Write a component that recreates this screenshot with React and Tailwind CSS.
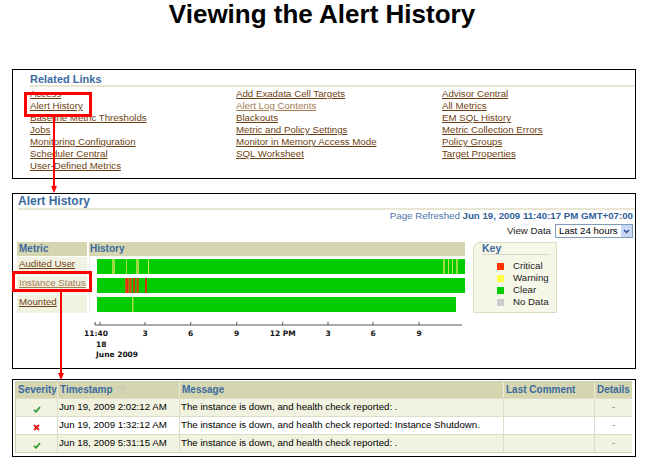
import React from 'react'

const col1 = ['Access', 'Alert History', 'Baseline Metric Thresholds', 'Jobs', 'Monitoring Configuration', 'Scheduler Central', 'User-Defined Metrics']
const col2 = ['Add Exadata Cell Targets', 'Alert Log Contents', 'Blackouts', 'Metric and Policy Settings', 'Monitor in Memory Access Mode', 'SQL Worksheet']
const col3 = ['Advisor Central', 'All Metrics', 'EM SQL History', 'Metric Collection Errors', 'Policy Groups', 'Target Properties']

const visited = ['Alert Log Contents']

function LinkCol({ items }) {
  return (
    <div className="flex flex-col w-[206px] shrink-0">
      {items.map(t => (
        <a
          key={t}
          className={
            'h-[12px] leading-[12px] underline underline-offset-[1px] whitespace-nowrap ' +
            (visited.includes(t) ? 'text-[#a57c52]' : 'text-[#6e3f12]')
          }
        >
          {t}
        </a>
      ))}
    </div>
  )
}

function Bar({ end = 368, stripes }) {
  return (
    <svg width="368" height="15" className="block">
      <rect x="0" y="0" width={end} height="15" fill="#00cc00" />
      {stripes.map(([x, w, c], i) => (
        <rect key={i} x={x} y="0" width={w} height="15" fill={c} />
      ))}
    </svg>
  )
}

const rows = [
  {
    name: 'Audited User',
    light: false,
    end: 368,
    stripes: [
      [15, 3, '#99dd44'], [29, 1, '#aadd44'], [39, 3, '#99dd44'], [51, 1, '#ccee55'],
      [346, 2, '#99dd44'], [351, 1, '#bbe655'], [355, 1, '#bbe655'], [359, 2, '#99dd44'],
    ],
  },
  {
    name: 'Instance Status',
    light: true,
    end: 368,
    stripes: [
      [28, 4, '#cc6611'], [29, 2, '#dd3311'], [32.5, 2, '#dd4411'], [36, 2, '#cc3311'],
      [39.5, 2, '#cc6611'], [40, 1.5, '#dd3311'], [48, 2, '#cc3311'],
    ],
  },
  { name: 'Mounted', light: false, end: 359, stripes: [[35, 1.5, '#aadd44']] },
]

const keyItems = [
  ['Critical', 'bg-[#ff3300]'],
  ['Warning', 'bg-[#ffff44]'],
  ['Clear', 'bg-[#00cc00]'],
  ['No Data', 'bg-[#cccccc]'],
]

const ticks = [15, 20, 65, 110.7, 156.7, 202.7, 248, 293, 339]
const tickLabels = [
  [65, '3'], [110.7, '6'], [156.7, '9'], [202.7, '12 PM'], [248, '3'], [293, '6'], [339, '9'],
]

const alerts = [
  { ok: true, ts: 'Jun 19, 2009 2:02:12 AM', msg: 'The instance is down, and health check reported: .', bg: 'bg-[#f2f2e1]' },
  { ok: false, ts: 'Jun 19, 2009 1:32:12 AM', msg: 'The instance is down, and health check reported: Instance Shutdown.', bg: 'bg-white' },
  { ok: true, ts: 'Jun 18, 2009 5:31:15 AM', msg: 'The instance is down, and health check reported: .', bg: 'bg-[#f2f2e1]' },
]

function Check() {
  return (
    <svg width="8" height="7" viewBox="0 0 8 7">
      <path d="M1 3.8 L3 5.8 L7 1" fill="none" stroke="#2f9a2f" strokeWidth="1.7" />
    </svg>
  )
}

function Cross() {
  return (
    <svg width="7" height="7" viewBox="0 0 7 7">
      <path d="M1 1 L6 6 M6 1 L1 6" fill="none" stroke="#e01818" strokeWidth="1.8" />
    </svg>
  )
}

export default function App() {
  return (
    <div className="relative w-[646px] h-[465px] bg-white overflow-hidden font-['Liberation_Sans',Arial,sans-serif] text-black text-[9.7px]">
      <h1 className="pt-[1px] h-[69px] text-center text-[26px] leading-[26px] font-bold pr-[2px]">
        Viewing the Alert History
      </h1>

      {/* related links */}
      <div className="ml-[12px] w-[624px] h-[110px] border border-black pt-[3px] pl-[17px]">
        <div className="h-[14px] leading-[12px] text-[11px] font-bold text-[#3a6aa0] border-b-2 border-[#e6e6d3]">
          Related Links
        </div>
        <div className="mt-[1px] flex">
          <LinkCol items={col1} />
          <LinkCol items={col2} />
          <LinkCol items={col3} />
        </div>
      </div>

      {/* alert history chart */}
      <div className="mt-[14px] ml-[12px] w-[624px] h-[176px] border border-black pl-[4px]">
        <div className="ml-[1px] h-[16px] leading-[14px] text-[12px] font-bold text-[#3a6aa0] border-b-2 border-[#e6e6d3]">
          Alert History
        </div>
        <div className="h-[12px] leading-[12px] text-right pr-[2px] text-[#4b74a8]">
          Page Refreshed <span className="font-bold text-[#2f5f98]">Jun 19, 2009 11:40:17 PM GMT+07:00</span>
        </div>
        <div className="mt-[2px] h-[14px] flex justify-end items-center gap-[4px] pr-[2px]">
          <span className="text-[#222]">View Data</span>
          <div className="w-[78px] h-[14px] border border-[#7f9db9] bg-white flex items-center">
            <span className="flex-1 pl-[3px] leading-[12px]">Last 24 hours</span>
            <span className="w-[11px] h-[12px] bg-[#c9d8f6] flex items-center justify-center">
              <svg width="7" height="5" viewBox="0 0 7 5">
                <path d="M1 1 L3.5 3.5 L6 1" fill="none" stroke="#2b4c8c" strokeWidth="1.4" />
              </svg>
            </span>
          </div>
        </div>

        <div className="mt-[4px] flex">
          <div className="w-[448px]">
            <div className="h-[14px] flex leading-[14px] font-bold text-[#3a6aa0] text-[10px]">
              <div className="w-[70px] bg-[#d5d5b0] pl-[2px]">Metric</div>
              <div className="ml-[2px] flex-1 bg-[#d5d5b0] pl-[1px]">History</div>
            </div>
            {rows.map(r => (
              <div key={r.name} className="mt-[1px] h-[18px] flex">
                <div className="w-[70px] bg-[#f2f2e2] pl-[2px] leading-[14px]">
                  <a className={'underline whitespace-nowrap ' + (r.light ? 'text-[#a57c52]' : 'text-[#6e3f12]')}>
                    {r.name}
                  </a>
                </div>
                <div className="ml-[2px] flex-1 bg-white border-l border-[#ecece0] pl-[7px] py-[2px]">
                  <Bar end={r.end} stripes={r.stripes} />
                </div>
              </div>
            ))}
          </div>

          <div className="ml-[8px] w-[84px] h-[71px] bg-[#f6f6e9] border border-[#dcdcc4] rounded-tl-[7px] pl-[8px]">
            <div className="w-[67px] h-[12px] leading-[11px] text-[10.5px] font-bold text-[#3a6aa0] border-b border-[#d8d8c0]">
              Key
            </div>
            <div className="mt-[5px] flex flex-col">
              {keyItems.map(([label, c]) => (
                <div key={label} className="h-[12px] flex items-center pl-[15px]">
                  <span className={'w-[7px] h-[7px] ' + c} />
                  <span className="ml-[9px] leading-[12px] text-[#222]">{label}</span>
                </div>
              ))}
            </div>
          </div>
        </div>

        <svg width="400" height="48" className="block ml-[63px] mt-[1px]">
          <line x1="15" y1="11" x2="382" y2="11" stroke="#555" strokeWidth="1" />
          {ticks.map(x => (
            <line key={x} x1={x} y1="8" x2={x} y2="11" stroke="#555" strokeWidth="1" />
          ))}
          <g fontFamily="'DejaVu Sans', Verdana, sans-serif" fontWeight="bold" fontSize="7.5" fill="#111">
            <text x="4" y="21.5">11:40</text>
            {tickLabels.map(([x, t], i) => (
              <text key={i} x={x} y="21.5" textAnchor="middle">{t}</text>
            ))}
            <text x="16" y="32.5">18</text>
            <text x="16" y="43">June 2009</text>
          </g>
        </svg>
      </div>

      {/* alerts table */}
      <div className="mt-[10px] ml-[12px] w-[624px] h-[78px] border border-black pt-[1px] pl-[2px]">
        <div className="w-[617px] border border-[#cfcfb5] grid grid-cols-[42px_122px_324px_91px_37px]">
          {['Severity', 'Timestamp', 'Message', 'Last Comment', 'Details'].map((h, i) => (
            <div
              key={h}
              className={
                'h-[16px] leading-[16px] bg-[#d5d6b0] font-bold text-[#3a6aa0] text-[10px] pl-[2px] flex items-center gap-[3px] ' +
                (i < 4 ? 'border-r border-[#eeeee0]' : '')
              }
            >
              {h}
              {h === 'Timestamp' && (
                <svg width="9" height="7" viewBox="0 0 9 7">
                  <path d="M0.5 0.5 L8.5 0.5 L4.5 6.5 Z" fill="none" stroke="#bfc6bc" strokeWidth="1" />
                </svg>
              )}
            </div>
          ))}
          {alerts.map((a, r) => (
            <React.Fragment key={r}>
              <div className={'h-[18px] flex items-center justify-center pt-[3px] border-r border-t border-[#dcdcc8] ' + a.bg}>
                {a.ok ? <Check /> : <Cross />}
              </div>
              <div className={'h-[18px] leading-[16px] pl-[1px] whitespace-nowrap border-r border-t border-[#dcdcc8] ' + a.bg}>
                {a.ts}
              </div>
              <div className={'h-[18px] leading-[16px] pl-[1px] whitespace-nowrap border-r border-t border-[#dcdcc8] ' + a.bg}>
                {a.msg}
              </div>
              <div className={'h-[18px] border-r border-t border-[#dcdcc8] ' + a.bg} />
              <div className={'h-[18px] leading-[16px] text-center text-[#777] border-t border-[#dcdcc8] ' + a.bg}>-</div>
            </React.Fragment>
          ))}
        </div>
      </div>

      {/* red callouts */}
      <div className="absolute left-[24px] top-[92px] w-[68px] h-[25px] border-[3px] border-[#ff0000]" />
      <div className="absolute left-[12px] top-[271px] w-[80px] h-[21px] border-[3px] border-[#ff0000]" />
      <svg className="absolute left-[49px] top-[117px]" width="10" height="76">
        <line x1="5" y1="0" x2="5" y2="72" stroke="#ff0000" strokeWidth="2" />
        <path d="M2 69 L5 76 L8 69 Z" fill="#ff0000" />
      </svg>
      <svg className="absolute left-[56px] top-[292px]" width="10" height="88">
        <line x1="5" y1="0" x2="5" y2="84" stroke="#ff0000" strokeWidth="2" />
        <path d="M2 81 L5 88 L8 81 Z" fill="#ff0000" />
      </svg>
    </div>
  )
}
